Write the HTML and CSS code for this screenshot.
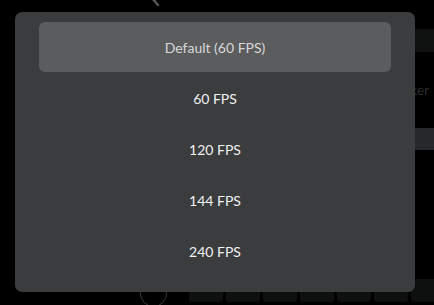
FILE: index.html
```html
<!DOCTYPE html>
<html lang="en">
<head>
<meta charset="utf-8">
<meta name="viewport" content="width=device-width, initial-scale=1.0">
<title>Frame rate limit</title>
<link rel="stylesheet" href="styles.css">
</head>
<body>

<div class="screen">
    <div class="behind">
        <svg class="search" width="14" height="8" viewBox="0 0 14 8">
            <line x1="2" y1="-2" x2="8" y2="5" stroke="#555759" stroke-width="2.4" stroke-linecap="round"/>
        </svg>
        <div class="side">
            <div class="side-box"></div>
            <p class="side-label">ker</p>
            <div class="side-bar"></div>
        </div>
        <div class="bottom">
            <div class="ring"></div>
            <div class="keys">
                <div class="key"></div>
                <div class="key"></div>
                <div class="key"></div>
                <div class="key"></div>
                <div class="key"></div>
                <div class="key"></div>
                <div class="key"></div>
            </div>
        </div>
    </div>

    <div class="modal">
        <div class="option selected">Default (60 FPS)</div>
        <div class="option">60 FPS</div>
        <div class="option">120 FPS</div>
        <div class="option">144 FPS</div>
        <div class="option">240 FPS</div>
    </div>
</div>

</body>
</html>
```

FILE: styles.css
```css
* {
    box-sizing: border-box;
}
body {
    margin: 0;
    background-color: #000;
    font-family: Lato, "Open Sans", sans-serif;
}
.screen {
    position: relative;
    width: 434px;
    height: 305px;
    overflow: hidden;
}
.behind {
    display: flex;
    flex-direction: column;
    height: 100%;
}
.search {
    display: block;
    margin-left: 150px;
}
.side {
    margin-left: 410px;
    margin-top: 21px;
}
.side-box {
    width: 20px;
    height: 23px;
    margin-left: 5px;
    background-color: #0f1111;
}
.side-label {
    margin: 30px 0 0 0;
    font-size: 14px;
    line-height: 16px;
    color: #2c2d2e;
    white-space: nowrap;
}
.side-bar {
    margin: 30px 0 0 5px;
    height: 22px;
    background-color: #272829;
}
.bottom {
    display: flex;
    align-items: flex-start;
    margin-top: auto;
    height: 26px;
}
.ring {
    flex-shrink: 0;
    width: 27px;
    height: 27px;
    margin: 1px 0 0 140px;
    border: 1.5px solid #3a3b3c;
    border-radius: 50%;
}
.keys {
    display: flex;
    flex-shrink: 0;
    gap: 3px;
    margin-left: 22px;
}
.key {
    flex-shrink: 0;
    width: 34px;
    height: 23px;
    border-radius: 3px;
    background-color: #0e0f0f;
}
.modal {
    position: absolute;
    left: 15px;
    top: 12px;
    width: 400px;
    height: 280px;
    padding: 10px 24px 16px;
    display: flex;
    flex-direction: column;
    gap: 1px;
    border-radius: 7px;
    background-color: #3b3c3e;
}
.option {
    height: 50px;
    display: flex;
    align-items: center;
    justify-content: center;
    border-radius: 6px;
    font-size: 14px;
    color: #f0f1f1;
}
.option.selected {
    background-color: #5b5c5e;
    color: #d6d8d9;
}
```
